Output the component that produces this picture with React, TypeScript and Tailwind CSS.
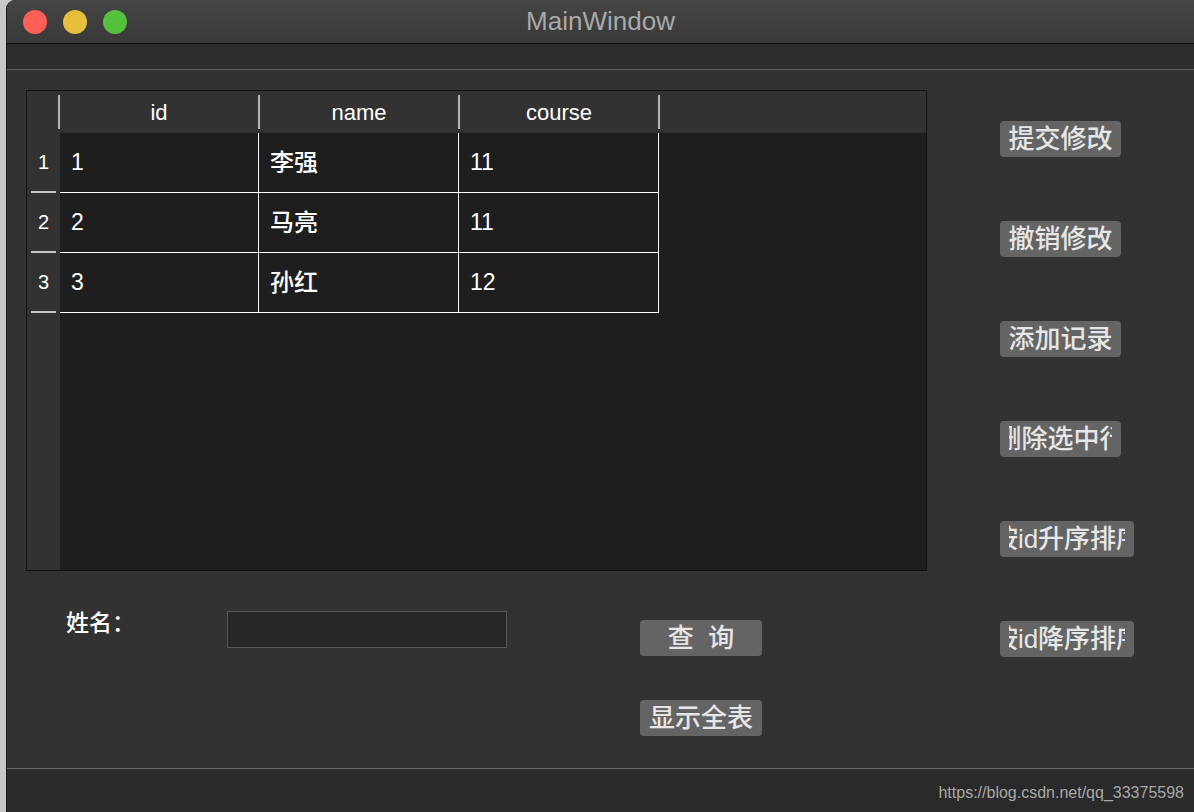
const sans = { fontFamily: '"Liberation Sans", "Noto Sans CJK SC", sans-serif' };

const rows = [
  { id: "1", name: "李强", course: "11" },
  { id: "2", name: "马亮", course: "11" },
  { id: "3", name: "孙红", course: "12" },
];

const SideButton = ({ label, width }: { label: string; width: string }) => {
  return (
    <div className={`${width} h-[36px] rounded-[4px] bg-[#646464] flex items-center`}>
      <div className="mx-[9px] flex-1 overflow-hidden flex justify-center">
        <span className="whitespace-nowrap text-[26px] leading-[30px] font-medium text-[#e6e6e6]">{label}</span>
      </div>
    </div>
  );
};

const FormButton = ({ label }: { label: string }) => {
  return (
    <div className="w-[122px] h-[36px] rounded-[4px] bg-[#646464] flex items-center justify-center">
      <span className="whitespace-nowrap text-[26px] leading-[30px] font-medium text-[#e6e6e6]">{label}</span>
    </div>
  );
};

const Table = () => {
  return (
    <div className="w-[901px] h-[481px] border border-[#131313] flex bg-[#1e1e1e]">
      {/* vertical header */}
      <div className="w-[33px] bg-[#323232] flex flex-col">
        <div className="h-[42px]" />
        {rows.map((r) => (
          <div key={r.id} className="h-[60px] flex flex-col">
            <div className="flex-1 flex items-center justify-center text-[20px] text-white">{r.id}</div>
            <div className="mx-[4px] h-[2px] bg-[#c4c4c4]" />
          </div>
        ))}
      </div>
      <div className="flex-1 flex flex-col">
        {/* horizontal header */}
        <div className="h-[42px] -ml-[2px] bg-[#323232] flex items-center">
          {["id", "name", "course"].map((h) => (
            <div key={h} className="w-[200px] h-[34px] flex items-center justify-center border-l-2 border-[#b4b4b4] text-[22px] text-white">
              {h}
            </div>
          ))}
          <div className="h-[34px] border-l-2 border-[#b4b4b4]" />
        </div>
        <div className="w-[599px]">
          {rows.map((r) => (
            <div key={r.id} className="h-[60px] flex border-b border-white">
              <div className="w-[199px] border-r border-white pl-[11px] flex items-center text-[23px] text-white">{r.id}</div>
              <div className="w-[200px] border-r border-white pl-[11px] flex items-center text-[24px] font-medium text-white">{r.name}</div>
              <div className="w-[200px] border-r border-white pl-[11px] flex items-center text-[23px] text-white">{r.course}</div>
            </div>
          ))}
        </div>
      </div>
    </div>
  );
};

export default function App() {
  return (
    <div className="w-[1194px] h-[812px] flex bg-[#c8c8c8] overflow-hidden" style={sans}>
      <div className="w-[6px]" />
      <div className="flex-1 flex flex-col rounded-tl-[9px] overflow-hidden border-l border-[#1c1c1c] bg-[#323232]">
        {/* title bar */}
        <div className="h-[43px] bg-gradient-to-b from-[#454545] to-[#393939] flex items-center relative">
          <div className="flex gap-[16px] pl-[16px]">
            <div className="w-[24px] h-[24px] rounded-full bg-[#fe5f57]" />
            <div className="w-[24px] h-[24px] rounded-full bg-[#e6be3c]" />
            <div className="w-[24px] h-[24px] rounded-full bg-[#55c03b]" />
          </div>
          <div className="absolute inset-0 flex items-center justify-center text-[26px] text-[#a9a9a9]">MainWindow</div>
        </div>
        <div className="h-px bg-[#0e0e0e]" />
        {/* menu bar */}
        <div className="h-[25px] bg-[#2d2d2d]" />
        <div className="h-px bg-[#5c5c5c]" />
        {/* central widget */}
        <div className="h-[698px] flex">
          <div className="pl-[19px] pt-[20px] flex flex-col">
            <Table />
            <div className="pt-[40px] flex">
              <div className="ml-[40px] w-[161px] text-[23px] leading-[24px] font-medium text-white">姓名：</div>
              <div className="w-[280px] h-[37px] bg-[#272727] border border-[#575757]" />
              <div className="ml-[133px] mt-[9px] flex flex-col gap-[44px]">
                <FormButton label={"查\u00a0\u00a0询"} />
                <FormButton label="显示全表" />
              </div>
            </div>
          </div>
          <div className="ml-[73px] pt-[51px] flex flex-col gap-[64px]">
            <SideButton label="提交修改" width="w-[121px]" />
            <SideButton label="撤销修改" width="w-[121px]" />
            <SideButton label="添加记录" width="w-[121px]" />
            <SideButton label="删除选中行" width="w-[121px]" />
            <SideButton label="按id升序排序" width="w-[134px]" />
            <SideButton label="按id降序排序" width="w-[134px]" />
          </div>
        </div>
        <div className="h-px bg-[#6a6a6a]" />
        {/* status bar */}
        <div className="flex-1 bg-[#2a2a2a] flex items-center justify-end pr-[10px] pt-[4px] text-[16px] text-[#a8a8a8]">
          https://blog.csdn.net/qq_33375598
        </div>
      </div>
    </div>
  );
}
